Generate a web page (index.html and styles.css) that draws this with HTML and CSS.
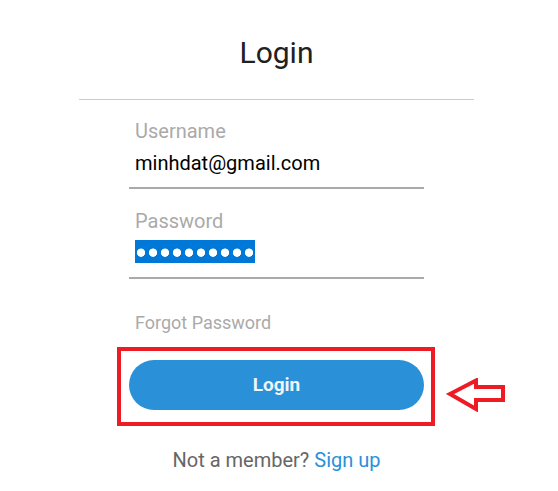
FILE: index.html
```html
<!DOCTYPE html>
<html lang="en">
<head>
<meta charset="utf-8">
<title>Login</title>
<link rel="stylesheet" href="styles.css">
</head>
<body>
<main class="login">
  <h1 class="title">Login</h1>
  <hr class="divider">
  <form class="form">
    <div class="field">
      <label class="label">Username</label>
      <div class="value">minhdat@gmail.com</div>
    </div>
    <div class="field">
      <label class="label">Password</label>
      <div class="value"><span class="mask" role="img" aria-label="password"></span></div>
    </div>
    <a class="forgot" href="#">Forgot Password</a>
    <div class="action">
      <button class="btn" type="button">Login</button>
      <span class="callout-box"></span>
      <svg class="callout-arrow" viewBox="0 0 60 34" width="60" height="34" aria-hidden="true">
        <polygon points="4,16 30,2.5 30,9 57,9 57,22 30,22 30,31" fill="none" stroke="#ed1c24" stroke-width="4" stroke-linejoin="miter"/>
      </svg>
    </div>
    <p class="signup">Not a member? <a href="#">Sign up</a></p>
  </form>
</main>
</body>
</html>
```

FILE: styles.css
```css
html, body {
  margin: 0;
  background: #ffffff;
}

body {
  font-family: Roboto, "Liberation Sans", Arial, sans-serif;
}

.login {
  width: 395px;
  margin-left: 79px;
  padding-top: 35px;
  display: flex;
  flex-direction: column;
}

.title {
  margin: 0;
  font-size: 30px;
  line-height: 36px;
  font-weight: 400;
  text-align: center;
  color: #212121;
}

.divider {
  margin: 28px 0 0;
  border: 0;
  height: 1px;
  background: #cccccc;
}

.form {
  padding: 19px 50px 0;
  display: flex;
  flex-direction: column;
  margin: 0;
}

.field {
  display: flex;
  flex-direction: column;
}

.field + .field {
  margin-top: 20px;
}

.label {
  padding-left: 6px;
  font-size: 20px;
  line-height: 24px;
  color: #aaaaaa;
}

.value {
  margin-top: 8px;
  padding: 0 6px 12px;
  height: 24px;
  font-size: 20px;
  line-height: 24px;
  color: #000000;
  border-bottom: 2px solid #aaaaaa;
}

.mask {
  display: inline-block;
  vertical-align: top;
  margin-top: -1px;
  width: 120px;
  height: 23px;
  background-color: #0078d7;
  background-image: radial-gradient(circle at 6px 55%, #ffffff 3.8px, rgba(255, 255, 255, 0) 4.5px);
  background-size: 12px 100%;
  background-repeat: repeat-x;
  background-position: 0 0;
}

.forgot {
  margin-top: 33px;
  padding-left: 6px;
  font-size: 18px;
  line-height: 22px;
  color: #aaaaaa;
  text-decoration: none;
}

.action {
  margin-top: 26px;
  position: relative;
}

.btn {
  display: block;
  width: 100%;
  height: 50px;
  border: 0;
  border-radius: 25px;
  background: #2a90d8;
  color: #eef5fb;
  font-family: Roboto, "Liberation Sans", Arial, sans-serif;
  font-weight: 700;
  font-size: 19px;
  line-height: 24px;
  padding: 0;
}

.callout-box {
  position: absolute;
  left: -12px;
  right: -11px;
  top: -13px;
  bottom: -16px;
  border: 4px solid #ed1c24;
  pointer-events: none;
}

.callout-arrow {
  position: absolute;
  left: 317px;
  top: 18px;
}

.signup {
  margin: 38px 0 0;
  text-align: center;
  font-size: 20px;
  line-height: 24px;
  color: #666666;
}

.signup a {
  color: #2a90d8;
  text-decoration: none;
}
```
